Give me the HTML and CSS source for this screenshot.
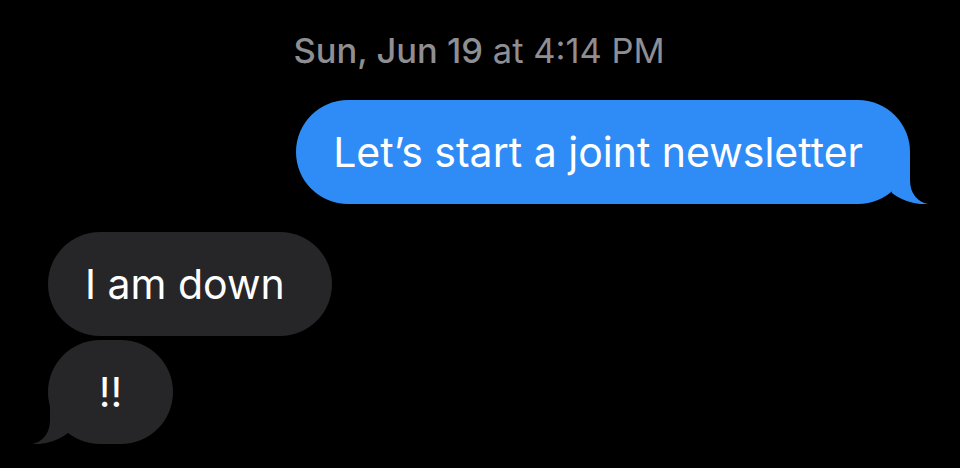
FILE: index.html
```html
<!DOCTYPE html>
<html lang="en">
<head>
    <meta charset="UTF-8">
    <meta name="viewport" content="width=device-width, initial-scale=1.0">
    <title>Messages</title>
    <link rel="stylesheet" href="styles.css">
</head>
<body>
    <div class="thread">
        <p class="stamp"><b>Sun, Jun 19</b> at 4:14 PM</p>

        <div class="row sent">
            <div class="bubble blue tailed">
                Let’s start a joint newsletter
                <svg class="tail" viewBox="0 0 40 50" width="40" height="50"><path d="M0 0 L22 0 L22 26 C22 40 30 48 40 50 C28 51 14 47 4 39 Z"/></svg>
            </div>
        </div>

        <div class="row received">
            <div class="bubble gray">I am down</div>
        </div>
        <div class="row received tight">
            <div class="bubble gray short tailed">
                !!
                <svg class="tail" viewBox="0 0 40 50" width="40" height="50"><path d="M0 0 L22 0 L22 26 C22 40 30 48 40 50 C28 51 14 47 4 39 Z"/></svg>
            </div>
        </div>
    </div>
</body>
</html>
```

FILE: styles.css
```css
* {
    margin: 0;
    padding: 0;
    box-sizing: border-box;
}
body {
    background: #000;
    color: #fff;
    font-family: Inter, "Noto Sans", sans-serif;
    width: 960px;
    height: 468px;
    overflow: hidden;
}
.thread {
    display: flex;
    flex-direction: column;
    padding: 31px 50px 0 48px;
}
.stamp {
    text-align: center;
    font-size: 34.5px;
    line-height: 40px;
    color: #8e8e93;
    font-weight: 400;
}
.stamp b {
    font-weight: 500;
}
.row {
    display: flex;
}
.sent {
    justify-content: flex-end;
    margin-top: 29px;
}
.received {
    margin-top: 28px;
}
.received.tight {
    margin-top: 4px;
}
.bubble {
    position: relative;
    font-size: 41px;
    line-height: 50px;
    padding: 27px 47px 27px 37px;
    border-radius: 52px;
    white-space: nowrap;
    -webkit-text-fill-color: #fff;
}
.blue {
    background: #2f8cf6;
    color: #2f8cf6;
}
.gray {
    background: #262628;
    color: #262628;
}
.short {
    width: 125px;
    padding-left: 0;
    padding-right: 0;
    text-align: center;
}
.tail {
    position: absolute;
    bottom: 0;
    right: -18px;
    fill: currentColor;
}
.received .tail {
    right: auto;
    left: -16px;
    transform: scaleX(-1);
}
```
